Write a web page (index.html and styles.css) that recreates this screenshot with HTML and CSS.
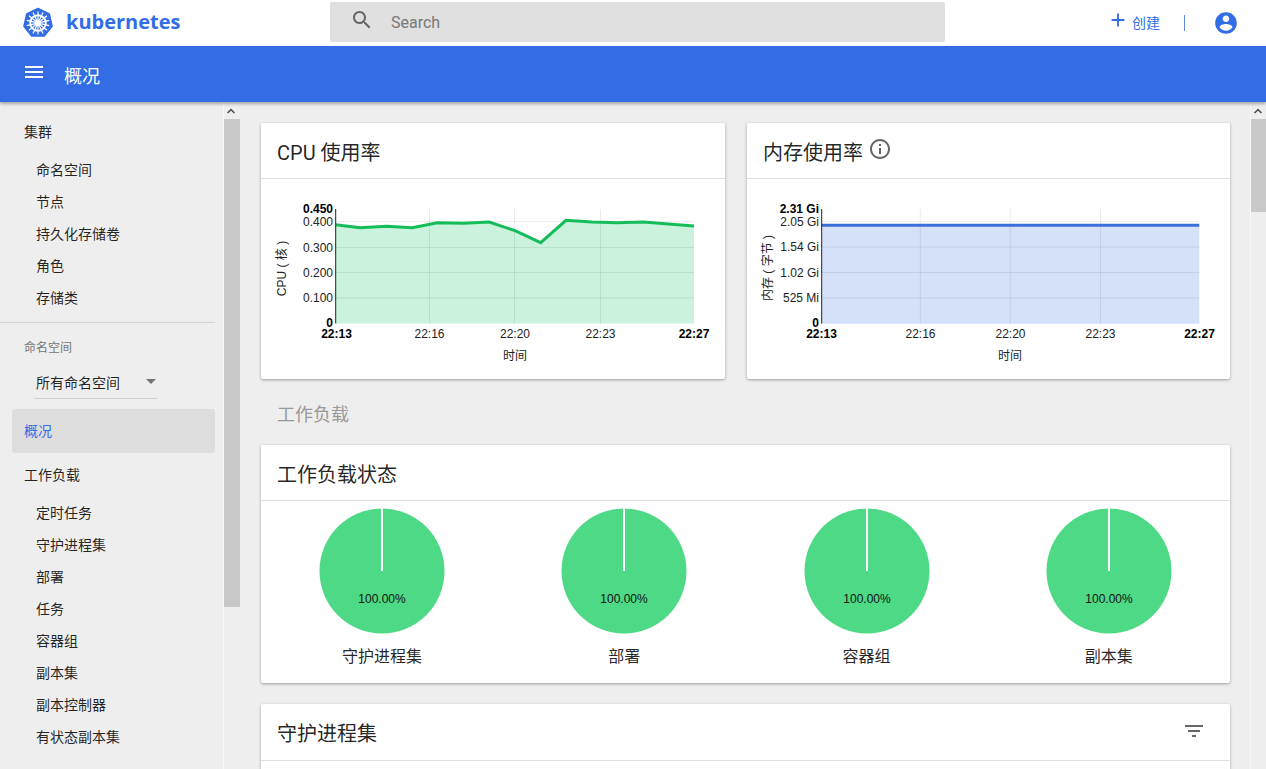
FILE: index.html
```html
<!DOCTYPE html>
<html lang="zh">
<head>
<meta charset="utf-8">
<title>概况 - Kubernetes Dashboard</title>
<link rel="stylesheet" href="styles.css">
</head>
<body>
<header class="topbar">
  <div class="brand">
    <svg class="logo" viewBox="0 0 32 32">
      <path class="logo-hept" d="M16 1.500 27.300 7 30.100 19.300 22.300 29.100H9.700L1.900 19.300 4.700 7Z"/>
      <g class="logo-wheel">
        <circle cx="16" cy="16" r="7.800"/>
        <path d="M16 4.500V27.500M7 8.800 25 23.200M25 8.800 7 23.200M4.800 18.600 27.200 13.400M27.200 18.600 4.800 13.400M11 26.400 21 5.600M21 26.400 11 5.600"/>
      </g>
      <circle class="logo-hub" cx="16" cy="16" r="2.200"/>
    </svg>
    <span class="brand-name">kubernetes</span>
  </div>
  <div class="search">
    <svg class="search-icon" viewBox="0 0 24 24"><path d="M15.500 14h-.79l-.28-.27C15.410 12.590 16 11.110 16 9.500 16 5.910 13.090 3 9.500 3S3 5.910 3 9.500 5.910 16 9.500 16c1.610 0 3.090-.59 4.230-1.570l.27.28v.79l5 4.990L20.490 19l-4.990-5zm-6 0C7.010 14 5 11.990 5 9.500S7.010 5 9.500 5 14 7.010 14 9.500 11.990 14 9.500 14z"/></svg>
    <span class="search-text">Search</span>
  </div>
  <div class="actions">
    <svg class="add-icon" viewBox="0 0 24 24"><path d="M19 13h-6v6h-2v-6H5v-2h6V5h2v6h6v2z"/></svg>
    <span class="create">创建</span>
    <span class="vline"></span>
    <svg class="account-icon" viewBox="0 0 24 24"><path d="M12 2C6.480 2 2 6.480 2 12s4.480 10 10 10 10-4.480 10-10S17.520 2 12 2zm0 3c1.660 0 3 1.340 3 3s-1.340 3-3 3-3-1.340-3-3 1.340-3 3-3zm0 14.200c-2.500 0-4.710-1.280-6-3.220.03-1.990 4-3.080 6-3.080 1.990 0 5.970 1.090 6 3.080-1.290 1.940-3.500 3.220-6 3.220z"/></svg>
  </div>
</header>

<div class="bluebar">
  <svg class="menu-icon" viewBox="0 0 24 24"><path d="M3 18h18v-2H3v2zm0-5h18v-2H3v2zm0-7v2h18V6H3z"/></svg>
  <span class="page-title">概况</span>
</div>

<div class="layout">
  <nav class="sidebar">
    <div class="nav-head first">集群</div>
    <div class="nav-item">命名空间</div>
    <div class="nav-item">节点</div>
    <div class="nav-item">持久化存储卷</div>
    <div class="nav-item">角色</div>
    <div class="nav-item">存储类</div>
    <div class="nav-divider"></div>
    <div class="nav-label">命名空间</div>
    <div class="nav-select"><span>所有命名空间</span><i class="caret"></i></div>
    <div class="nav-active">概况</div>
    <div class="nav-head">工作负载</div>
    <div class="nav-item">定时任务</div>
    <div class="nav-item">守护进程集</div>
    <div class="nav-item">部署</div>
    <div class="nav-item">任务</div>
    <div class="nav-item">容器组</div>
    <div class="nav-item">副本集</div>
    <div class="nav-item">副本控制器</div>
    <div class="nav-item">有状态副本集</div>
  </nav>
  <div class="scrollbar">
    <svg class="scroll-up" viewBox="0 0 24 24"><path d="M12 7l-8 8 2.200 2.200L12 11.400l5.800 5.800L20 15z"/></svg>
    <div class="thumb thumb-nav"></div>
  </div>

  <main class="content">
    <div class="chart-row">
      <section class="card">
        <h2 class="card-title">CPU 使用率</h2>
        <svg class="chart" viewBox="261 179 464 200">
          <path class="cpu-area" d="M335.700 224.700 360 227.700 386.700 226.300 412.300 227.700 437.300 222.700 463.300 223.300 489.300 222 515 230.700 540.700 242.700 566 220.300 591.700 222 616.700 222.700 643.300 222 668.300 224 694 226V323.500H335.700Z"/>
          <g class="grid">
            <path d="M429.500 209V323.500M514.500 209V323.500M600.500 209V323.500M335.700 221.700H694M335.700 247.500H694M335.700 272.500H694M335.700 298H694"/>
          </g>
          <path class="cpu-line" d="M335.700 224.700 360 227.700 386.700 226.300 412.300 227.700 437.300 222.700 463.300 223.300 489.300 222 515 230.700 540.700 242.700 566 220.300 591.700 222 616.700 222.700 643.300 222 668.300 224 694 226"/>
          <path class="axis" d="M335.700 209V323.500"/>
          <g class="ytick">
            <text class="bold" x="333" y="213">0.450</text>
            <text x="333" y="226">0.400</text>
            <text x="333" y="251.500">0.300</text>
            <text x="333" y="277">0.200</text>
            <text x="333" y="302">0.100</text>
            <text class="bold" x="333" y="327">0</text>
          </g>
          <g class="xtick">
            <text class="bold" x="336.500" y="338">22:13</text>
            <text x="429.500" y="338">22:16</text>
            <text x="515" y="338">22:20</text>
            <text x="600.500" y="338">22:23</text>
            <text class="bold" x="694" y="338">22:27</text>
          </g>
          <text class="xlabel" x="515" y="360">时间</text>
          <text class="ylabel" transform="translate(286 268.500) rotate(-90)">CPU ( 核 )</text>
        </svg>
      </section>
      <section class="card">
        <h2 class="card-title">内存使用率<svg class="info-icon" viewBox="0 0 24 24"><path d="M11 17h2v-6h-2v6zm1-15C6.480 2 2 6.480 2 12s4.480 10 10 10 10-4.480 10-10S17.520 2 12 2zm0 18c-4.410 0-8-3.590-8-8s3.590-8 8-8 8 3.590 8 8-3.590 8-8 8zm-1-11h2V7h-2v2z"/></svg></h2>
        <svg class="chart" viewBox="747 179 483 200">
          <path class="mem-area" d="M821.700 225.300H1199.300V323.700H821.700Z"/>
          <g class="grid mem">
            <path d="M920.300 209V323.700M1010.300 209V323.700M1100.500 209V323.700M821.700 221.700H1199.300M821.700 247H1199.300M821.700 272.500H1199.300M821.700 298H1199.300"/>
          </g>
          <path class="mem-line" d="M821.700 225.300H1199.300"/>
          <path class="axis" d="M821.700 209V323.700"/>
          <g class="ytick">
            <text class="bold" x="819" y="213">2.31 Gi</text>
            <text x="819" y="226">2.05 Gi</text>
            <text x="819" y="251">1.54 Gi</text>
            <text x="819" y="277">1.02 Gi</text>
            <text x="819" y="302">525 Mi</text>
            <text class="bold" x="819" y="327">0</text>
          </g>
          <g class="xtick">
            <text class="bold" x="821.500" y="338">22:13</text>
            <text x="920.500" y="338">22:16</text>
            <text x="1010.500" y="338">22:20</text>
            <text x="1100.500" y="338">22:23</text>
            <text class="bold" x="1199.500" y="338">22:27</text>
          </g>
          <text class="xlabel" x="1010" y="360">时间</text>
          <text class="ylabel" transform="translate(772 268) rotate(-90)">内存 ( 字节 )</text>
        </svg>
      </section>
    </div>

    <h3 class="section-title">工作负载</h3>

    <section class="card">
      <h2 class="card-title">工作负载状态</h2>
      <div class="pies">
        <div class="pie-cell">
          <svg class="pie" viewBox="0 0 126 126"><circle cx="63" cy="63" r="62.500"/><path d="M63 0V63"/><text x="63" y="95">100.00%</text></svg>
          <div class="pie-label">守护进程集</div>
        </div>
        <div class="pie-cell">
          <svg class="pie" viewBox="0 0 126 126"><circle cx="63" cy="63" r="62.500"/><path d="M63 0V63"/><text x="63" y="95">100.00%</text></svg>
          <div class="pie-label">部署</div>
        </div>
        <div class="pie-cell">
          <svg class="pie" viewBox="0 0 126 126"><circle cx="63" cy="63" r="62.500"/><path d="M63 0V63"/><text x="63" y="95">100.00%</text></svg>
          <div class="pie-label">容器组</div>
        </div>
        <div class="pie-cell">
          <svg class="pie" viewBox="0 0 126 126"><circle cx="63" cy="63" r="62.500"/><path d="M63 0V63"/><text x="63" y="95">100.00%</text></svg>
          <div class="pie-label">副本集</div>
        </div>
      </div>
    </section>

    <section class="card next-card">
      <h2 class="card-title with-action">守护进程集<svg class="filter-icon" viewBox="0 0 24 24"><path d="M10 18h4v-2h-4v2zM3 6v2h18V6H3zm3 7h12v-2H6v2z"/></svg></h2>
      <div class="card-rest"></div>
    </section>
  </main>

  <div class="scrollbar right">
    <svg class="scroll-up" viewBox="0 0 24 24"><path d="M12 7l-8 8 2.200 2.200L12 11.400l5.800 5.800L20 15z"/></svg>
    <div class="thumb thumb-main"></div>
  </div>
</div>
</body>
</html>
```

FILE: styles.css
```css
* { box-sizing: border-box; }
html, body { margin: 0; height: 100%; overflow: hidden; }
body {
  display: flex;
  flex-direction: column;
  background: #eee;
  color: rgba(0, 0, 0, .87);
  font-family: Roboto, "Noto Sans CJK SC", sans-serif;
}

/* top bar */
.topbar {
  flex: none;
  height: 46px;
  display: flex;
  align-items: center;
  background: #fff;
}
.brand { width: 330px; display: flex; align-items: center; padding-left: 22px; height: 44px; }
.logo { width: 32px; height: 32px; flex: none; }
.logo-hept { fill: #326de6; stroke: #326de6; stroke-width: 1.500; stroke-linejoin: round; }
.logo-wheel circle { fill: none; stroke: #fff; stroke-width: 1.900; }
.logo-wheel path { fill: none; stroke: #fff; stroke-width: 1.200; }
.logo-hub { fill: #fff; }
.brand-name {
  margin: 0 0 3px 12px;
  color: #326de6;
  font-family: "Open Sans", sans-serif;
  font-size: 20px;
  font-weight: 700;
  letter-spacing: 0;
}
.search {
  width: 615px;
  height: 40px;
  margin-bottom: 2px;
  display: flex;
  align-items: center;
  background: #e0e0e0;
  border-radius: 2px;
  padding-left: 20px;
}
.search-icon { width: 24px; height: 24px; fill: #666; margin-bottom: 5px; }
.search-text { margin-left: 17px; font-size: 16px; color: #777; }
.actions { flex: 1; display: flex; align-items: center; height: 44px; padding-left: 162px; }
.add-icon { width: 22px; height: 22px; fill: #326de6; margin-bottom: 7px; }
.create { width: 28px; margin: 0 0 3px 3px; font-size: 14px; color: #326de6; white-space: nowrap; }
.vline { width: 1px; height: 16px; background: #326de6; margin-left: 24px; opacity: .8; }
.account-icon { width: 26px; height: 26px; fill: #326de6; margin-left: 28px; }

/* blue bar */
.bluebar {
  flex: none;
  height: 56px;
  display: flex;
  align-items: center;
  padding-left: 22px;
  background: #326de6;
  box-shadow: 0 2px 3px rgba(0, 0, 0, .3);
  position: relative;
  z-index: 2;
}
.menu-icon { width: 24px; height: 24px; fill: #fff; margin-bottom: 5px; }
.page-title { margin-left: 18px; padding-top: 2px; font-size: 18px; color: #fff; }

/* layout */
.layout { flex: 1; min-height: 0; display: flex; }
.sidebar {
  flex: none;
  width: 223px;
  overflow: hidden;
  background: #eee;
  font-size: 14px;
  padding-top: 14px;
}
.nav-head { height: 32px; line-height: 32px; padding-left: 24px; }
.nav-head.first { margin-bottom: 6px; }
.nav-active + .nav-head { margin-top: 6px; margin-bottom: 6px; }
.nav-item { height: 32px; line-height: 32px; padding-left: 36px; }
.nav-divider { width: 215px; height: 1px; background: #d4d4d4; margin-top: 8px; }
.nav-label { margin-top: 16px; padding-left: 24px; font-size: 12px; line-height: 18px; color: #757575; }
.nav-select {
  width: 123px;
  height: 33px;
  margin: 9px 0 0 34px;
  padding: 9px 0 0 2px;
  display: flex;
  justify-content: space-between;
  border-bottom: 1px solid #d0d0d0;
  line-height: 17px;
}
.caret {
  width: 0;
  height: 0;
  margin: 4px 1px 0 0;
  border: 5px solid transparent;
  border-top-color: #757575;
  border-bottom: 0;
}
.nav-active {
  width: 203px;
  height: 44px;
  margin: 10px 0 0 12px;
  padding-left: 12px;
  line-height: 44px;
  font-size: 14px;
  color: #326de6;
  background: #ddd;
  border-radius: 3px;
}

/* scrollbars */
.scrollbar { flex: none; width: 17px; background: #eee; border-left: 1px solid #f8f8f8; padding-top: 1px; }
.scrollbar.right { width: 16px; }
.scroll-up { display: block; width: 12px; height: 12px; margin: 2px 0 2px 1px; fill: #505050; }
.thumb { background: #c8c8c8; width: 16px; }
.thumb-nav { height: 488px; }
.thumb-main { height: 93px; }

/* content */
.content { flex: 1; min-width: 0; overflow: hidden; padding: 21px 20px 0 21px; }
.chart-row { display: grid; grid-template-columns: 464px 483px; gap: 22px; }
.card {
  background: #fff;
  border-radius: 2px;
  box-shadow: 0 1px 3px rgba(0, 0, 0, .35);
}
.card-title {
  margin: 0;
  height: 56px;
  display: flex;
  align-items: center;
  padding: 2px 0 0 16px;
  font-size: 20px;
  font-weight: 400;
  border-bottom: 1px solid #e0e0e0;
}
.info-icon { width: 24px; height: 24px; fill: #666; margin: 0 0 6px 5px; }
.with-action { height: 57px; padding-top: 1px; justify-content: space-between; padding-right: 24px; }
.filter-icon { width: 24px; height: 24px; fill: #666; margin-bottom: 4px; }
.chart { display: block; width: 100%; height: 200px; }
.section-title {
  margin: 0;
  height: 66px;
  display: flex;
  align-items: center;
  padding: 2px 0 0 16px;
  font-size: 18px;
  font-weight: 400;
  color: #999;
}

/* chart parts */
.cpu-area { fill: #caf2dd; }
.mem-area { fill: #d5e1f9; }
.grid path { fill: none; stroke: rgba(0, 0, 0, .08); stroke-width: 1; }
.cpu-line { fill: none; stroke: #15bd5a; stroke-width: 3; }
.mem-line { fill: none; stroke: #3a6fd8; stroke-width: 3; }
.axis { fill: none; stroke: #222; stroke-width: 1; }
.chart text { font-family: "Liberation Sans", "Noto Sans CJK SC", sans-serif; font-size: 12px; fill: #222; }
.chart .bold { font-weight: 700; fill: #000; }
.ytick text { text-anchor: end; }
.xtick text { text-anchor: middle; }
.chart .xlabel { text-anchor: middle; }
.chart .ylabel { text-anchor: middle; font-size: 12px; }

/* pies */
.pies { display: grid; grid-template-columns: repeat(4, 1fr); height: 182px; padding-top: 7px; }
.pie-cell { display: flex; flex-direction: column; align-items: center; }
.pie { display: block; width: 126px; height: 126px; }
.pie circle { fill: #4dd985; }
.pie path { fill: none; stroke: #fff; stroke-width: 2; }
.pie text {
  font-family: "Liberation Sans", sans-serif;
  font-size: 12px;
  text-anchor: middle;
  fill: #111;
}
.pie-label { margin-top: 12px; font-size: 16px; line-height: 22px; }
.next-card { margin-top: 21px; }
.card-rest { height: 80px; }
```
